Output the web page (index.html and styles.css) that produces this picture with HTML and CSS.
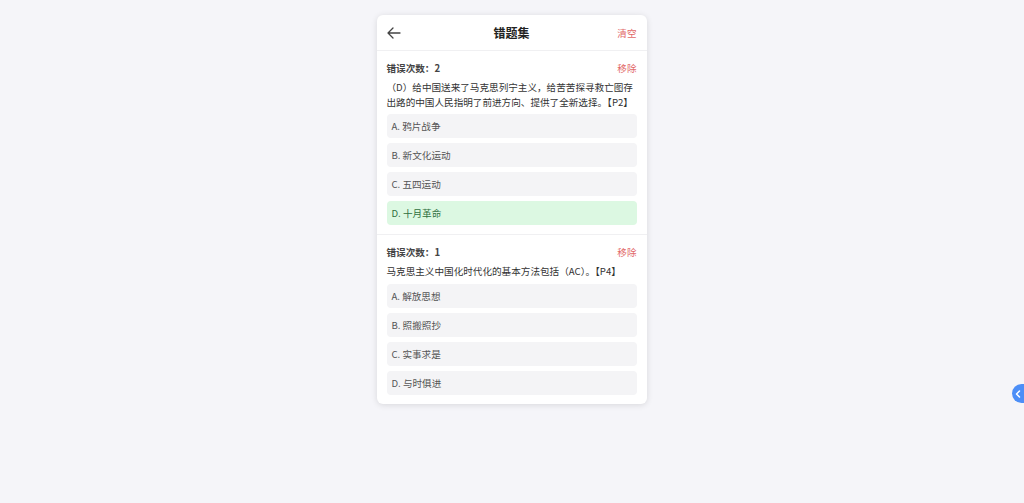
FILE: index.html
```html
<!DOCTYPE html>
<html lang="zh-CN">
<head>
    <meta charset="UTF-8">
    <meta name="viewport" content="width=device-width, initial-scale=1.0">
    <title>错题集</title>
    <link rel="stylesheet" href="styles.css">
</head>
<body>
    <div class="card">
        <div class="header">
            <span class="back">
                <svg width="14" height="12" viewBox="0 0 14 12"><path d="M13 6H1.5M6 1L1 6l5 5" fill="none" stroke="#444" stroke-width="1.3" stroke-linecap="round" stroke-linejoin="round"/></svg>
            </span>
            <h1>错题集</h1>
            <span class="clear">清空</span>
        </div>

        <div class="item">
            <div class="meta">
                <span class="count">错误次数：2</span>
                <span class="remove">移除</span>
            </div>
            <p class="question">（D）给中国送来了马克思列宁主义，给苦苦探寻救亡图存出路的中国人民指明了前进方向、提供了全新选择。【P2】</p>
            <div class="options">
                <div class="option">A. 鸦片战争</div>
                <div class="option">B. 新文化运动</div>
                <div class="option">C. 五四运动</div>
                <div class="option correct">D. 十月革命</div>
            </div>
        </div>

        <div class="item">
            <div class="meta">
                <span class="count">错误次数：1</span>
                <span class="remove">移除</span>
            </div>
            <p class="question">马克思主义中国化时代化的基本方法包括（AC）。【P4】</p>
            <div class="options">
                <div class="option">A. 解放思想</div>
                <div class="option">B. 照搬照抄</div>
                <div class="option">C. 实事求是</div>
                <div class="option">D. 与时俱进</div>
            </div>
        </div>
    </div>

    <div class="side-tab">
        <svg width="6" height="8" viewBox="0 0 6 8"><path d="M4.5 1L1.5 4l3 3" fill="none" stroke="#fff" stroke-width="1.5" stroke-linecap="round" stroke-linejoin="round"/></svg>
    </div>
</body>
</html>
```

FILE: styles.css
```css
body {
    margin: 0;
    padding: 15px 0;
    background: #f5f5f9;
    font-family: "Noto Sans CJK SC", "Noto Sans", sans-serif;
    color: #333;
    display: flex;
    justify-content: center;
    align-items: flex-start;
    min-height: 100vh;
    box-sizing: border-box;
}

.card {
    width: 270px;
    background: #fff;
    border-radius: 6px;
    box-shadow: 0 1px 6px rgba(0, 0, 0, 0.12);
    margin-right: 1px;
}

.header {
    height: 35px;
    display: flex;
    align-items: center;
    justify-content: space-between;
    padding: 0 10px;
    border-bottom: 1px solid #f0f0f2;
}

.back {
    display: flex;
    align-items: center;
    width: 30px;
}

.header h1 {
    margin: 0;
    font-size: 12px;
    font-weight: bold;
    color: #222;
}

.clear {
    width: 30px;
    text-align: right;
    font-size: 9.6px;
    color: #e26868;
}

.item {
    padding: 10px 10px 9px;
    border-bottom: 1px solid #f0f0f2;
}

.item:last-child {
    border-bottom: none;
}

.meta {
    display: flex;
    justify-content: space-between;
    align-items: center;
    font-size: 9.6px;
    line-height: 14px;
}

.count {
    font-weight: bold;
    color: #444;
}

.remove {
    color: #e26868;
}

.question {
    margin: 5px 0 5px;
    font-size: 9.6px;
    line-height: 14.5px;
    color: #333;
}

.options {
    display: flex;
    flex-direction: column;
    gap: 5px;
}

.option {
    height: 24px;
    display: flex;
    align-items: center;
    padding: 0 5px;
    background: #f4f4f6;
    border-radius: 4px;
    font-size: 9.6px;
    color: #555;
}

.option.correct {
    background: #dcf8e2;
    color: #2f6f3e;
}

.side-tab {
    position: fixed;
    right: 0;
    top: 384px;
    width: 12px;
    height: 19px;
    background: #4c8ef7;
    border-radius: 10px 0 0 10px;
    display: flex;
    align-items: center;
    justify-content: center;
}
```
